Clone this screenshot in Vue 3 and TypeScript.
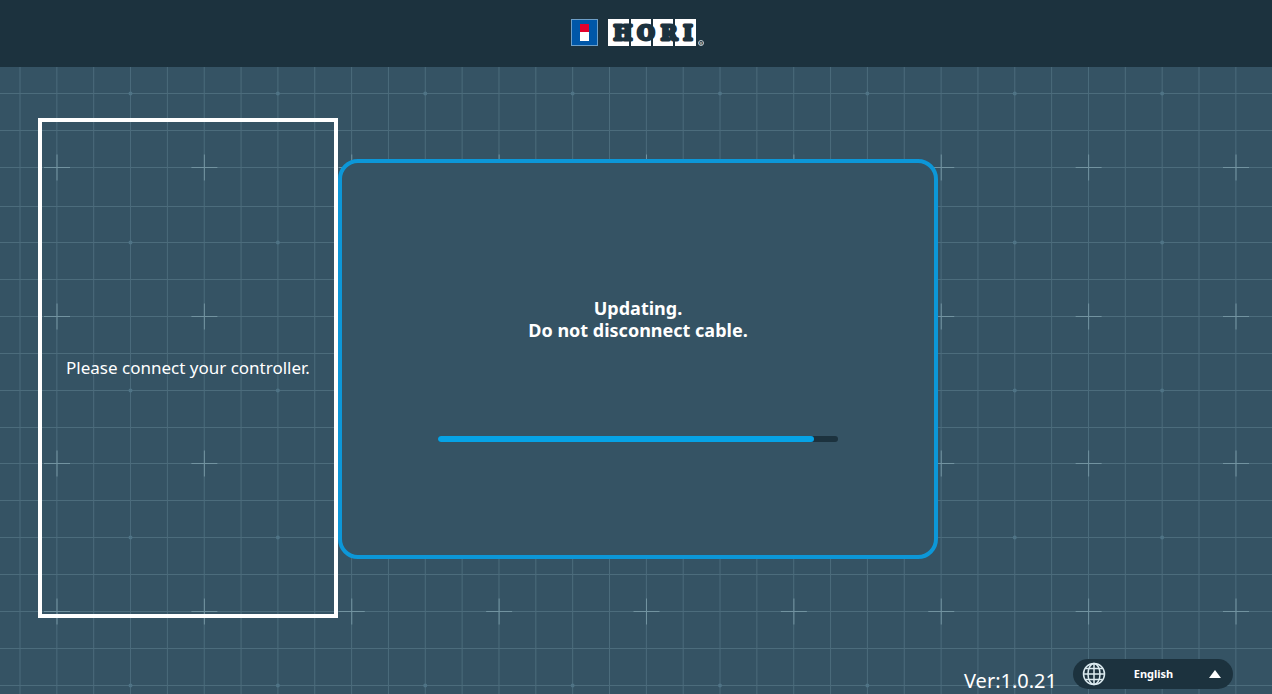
<script setup lang="ts">
import { ref } from 'vue'

interface Mark { x: number; y: number }

const range = (n: number): number[] => Array.from({ length: n }, (_, i) => i)

// The grid is four cells per block; crosses sit on block corners, dots on block centres.
const block = 1179 / 8
const columns = range(72).map((i) => 20 + (i * block) / 4)
const rows = [93, 130, 167, 206, 242, 279, 316, 353, 390, 427, 463, 500, 537, 574, 611, 648, 685, 722, 759, 796, 833, 870]
const crosses: Mark[] = [167, 316, 463, 611, 759].flatMap((y) => range(18).map((i) => ({ x: 57 + i * block, y })))
const dots: Mark[] = [93, 242, 390, 537, 685, 833].flatMap((y) => range(18).map((i) => ({ x: 130 + i * block, y })))

const progress = ref(94)
const version = '1.0.21'
const language = ref('English')
</script>

<template>
  <div class="screen">
    <svg class="grid" aria-hidden="true">
      <line v-for="x in columns" :key="'c' + x" :x1="x" :x2="x" y1="0" y2="100%" />
      <line v-for="y in rows" :key="'r' + y" x1="0" x2="100%" :y1="y + 0.5" :y2="y + 0.5" />
      <path v-for="(c, i) in crosses" :key="'x' + i" class="cross" :d="`M${c.x - 13} ${c.y + 0.5}h26M${c.x} ${c.y - 12.5}v26`" />
      <circle v-for="(d, i) in dots" :key="'d' + i" :cx="d.x + 0.5" :cy="d.y + 0.5" r="2" />
    </svg>

    <header class="top">
      <svg class="logo" width="136" height="30" viewBox="0 0 136 30" role="img" aria-label="HORI">
        <rect x="1.5" y="2.5" width="26" height="26" fill="#0057a8" stroke="#6d9fc8" />
        <rect x="10" y="7" width="9" height="9" fill="#e4002b" />
        <rect x="10" y="15" width="9" height="9" fill="#fff" />
        <path fill="#fff" d="M38 2h21v27h-21zM61 2h20v27h-20zM83 2h20v27h-20zM105 2h21v27h-21z" />
        <text class="word" x="53 76 99 118" y="23" text-anchor="middle">HORI</text>
        <circle cx="131" cy="26" r="2.5" fill="none" stroke="#c3cdd2" />
        <text class="reg" x="131" y="28" text-anchor="middle">R</text>
      </svg>
    </header>

    <main class="stage">
      <section class="device">
        <p>Please connect your controller.</p>
      </section>
      <section class="dialog" role="dialog" aria-labelledby="status">
        <p id="status" class="status">Updating.<br />Do not disconnect cable.</p>
        <div class="track" role="progressbar" aria-labelledby="status" :aria-valuenow="progress" aria-valuemin="0" aria-valuemax="100">
          <div class="fill" :style="{ width: progress + '%' }"></div>
        </div>
      </section>
    </main>

    <footer class="bottom">
      <span class="version">Ver:{{ version }}</span>
      <button class="language" type="button" aria-haspopup="listbox">
        <svg width="24" height="24" viewBox="0 0 24 24" aria-hidden="true" fill="none" stroke="#dcebf0" stroke-width="1.5">
          <circle cx="12" cy="12" r="10.5" />
          <ellipse cx="12" cy="12" rx="6" ry="10.5" />
          <path d="M12 1.5v21M1.5 12h21M3.5 6.5h17M3.5 17.5h17" />
        </svg>
        <span class="name">{{ language }}</span>
        <svg width="12" height="8" viewBox="0 0 12 8" aria-hidden="true"><path d="M6 0l6 8H0z" fill="#fff" /></svg>
      </button>
    </footer>
  </div>
</template>

<style>
body {
  margin: 0;
  background: #355364;
}
</style>

<style scoped>
.screen {
  position: relative;
  display: flex;
  flex-direction: column;
  box-sizing: border-box;
  min-height: 100vh;
  color: #fff;
  background: #355364;
  font-family: "Noto Sans", sans-serif;
  overflow: hidden;
}
.grid {
  position: absolute;
  inset: 0;
  width: 100%;
  height: 100%;
  stroke: #4c6c7c;
  fill: none;
}
.grid circle {
  fill: #4f7385;
  stroke: none;
}
.grid .cross {
  stroke: #7293a0;
}
.top {
  position: relative;
  display: flex;
  justify-content: center;
  box-sizing: border-box;
  height: 67px;
  padding: 17px 0 0 4px;
  background: #1c323e;
}
.logo .word {
  font: 700 20px "DejaVu Serif", serif;
  fill: #1c323e;
  stroke: #1c323e;
  stroke-width: 3px;
  stroke-linejoin: round;
}
.logo .reg {
  font: 4px "Liberation Sans", sans-serif;
  fill: #fff;
}
.stage {
  position: relative;
  display: grid;
  grid-template-columns: 1fr 600px 1fr;
  flex: 1;
  align-items: start;
  padding: 51px 0 0 4px;
}
.device {
  display: flex;
  align-items: center;
  justify-content: center;
  justify-self: end;
  box-sizing: border-box;
  width: 300px;
  height: 500px;
  border: 4px solid #fff;
}
.device p {
  margin: 0;
  font-size: 17px;
  line-height: 22px;
}
.dialog {
  display: flex;
  flex-direction: column;
  align-items: center;
  box-sizing: border-box;
  height: 400px;
  margin-top: 41px;
  padding-top: 134px;
  border: 4px solid #0c97d8;
  border-radius: 20px;
  background: #355364;
}
.status {
  margin: 0;
  font-size: 18px;
  font-weight: 700;
  line-height: 22px;
  text-align: center;
}
.track {
  width: 400px;
  height: 6px;
  margin-top: 95px;
  border-radius: 3px;
  background: #1c323e;
}
.fill {
  height: 100%;
  border-radius: 3px;
  background: #06a3e6;
}
.bottom {
  position: relative;
  display: flex;
  align-items: flex-start;
  justify-content: flex-end;
  gap: 16px;
  padding: 0 39px 1px 0;
}
.version {
  padding-top: 10px;
  font-size: 20px;
  line-height: 24px;
}
.language {
  display: flex;
  align-items: center;
  justify-content: space-between;
  width: 160px;
  height: 30px;
  padding: 0 12px 0 9px;
  border: 0;
  border-radius: 15px;
  color: #fff;
  background: #1c323e;
  font-family: inherit;
  cursor: pointer;
}
.name {
  padding-right: 8px;
  font-size: 11px;
  font-weight: 700;
  line-height: 16px;
}
</style>
